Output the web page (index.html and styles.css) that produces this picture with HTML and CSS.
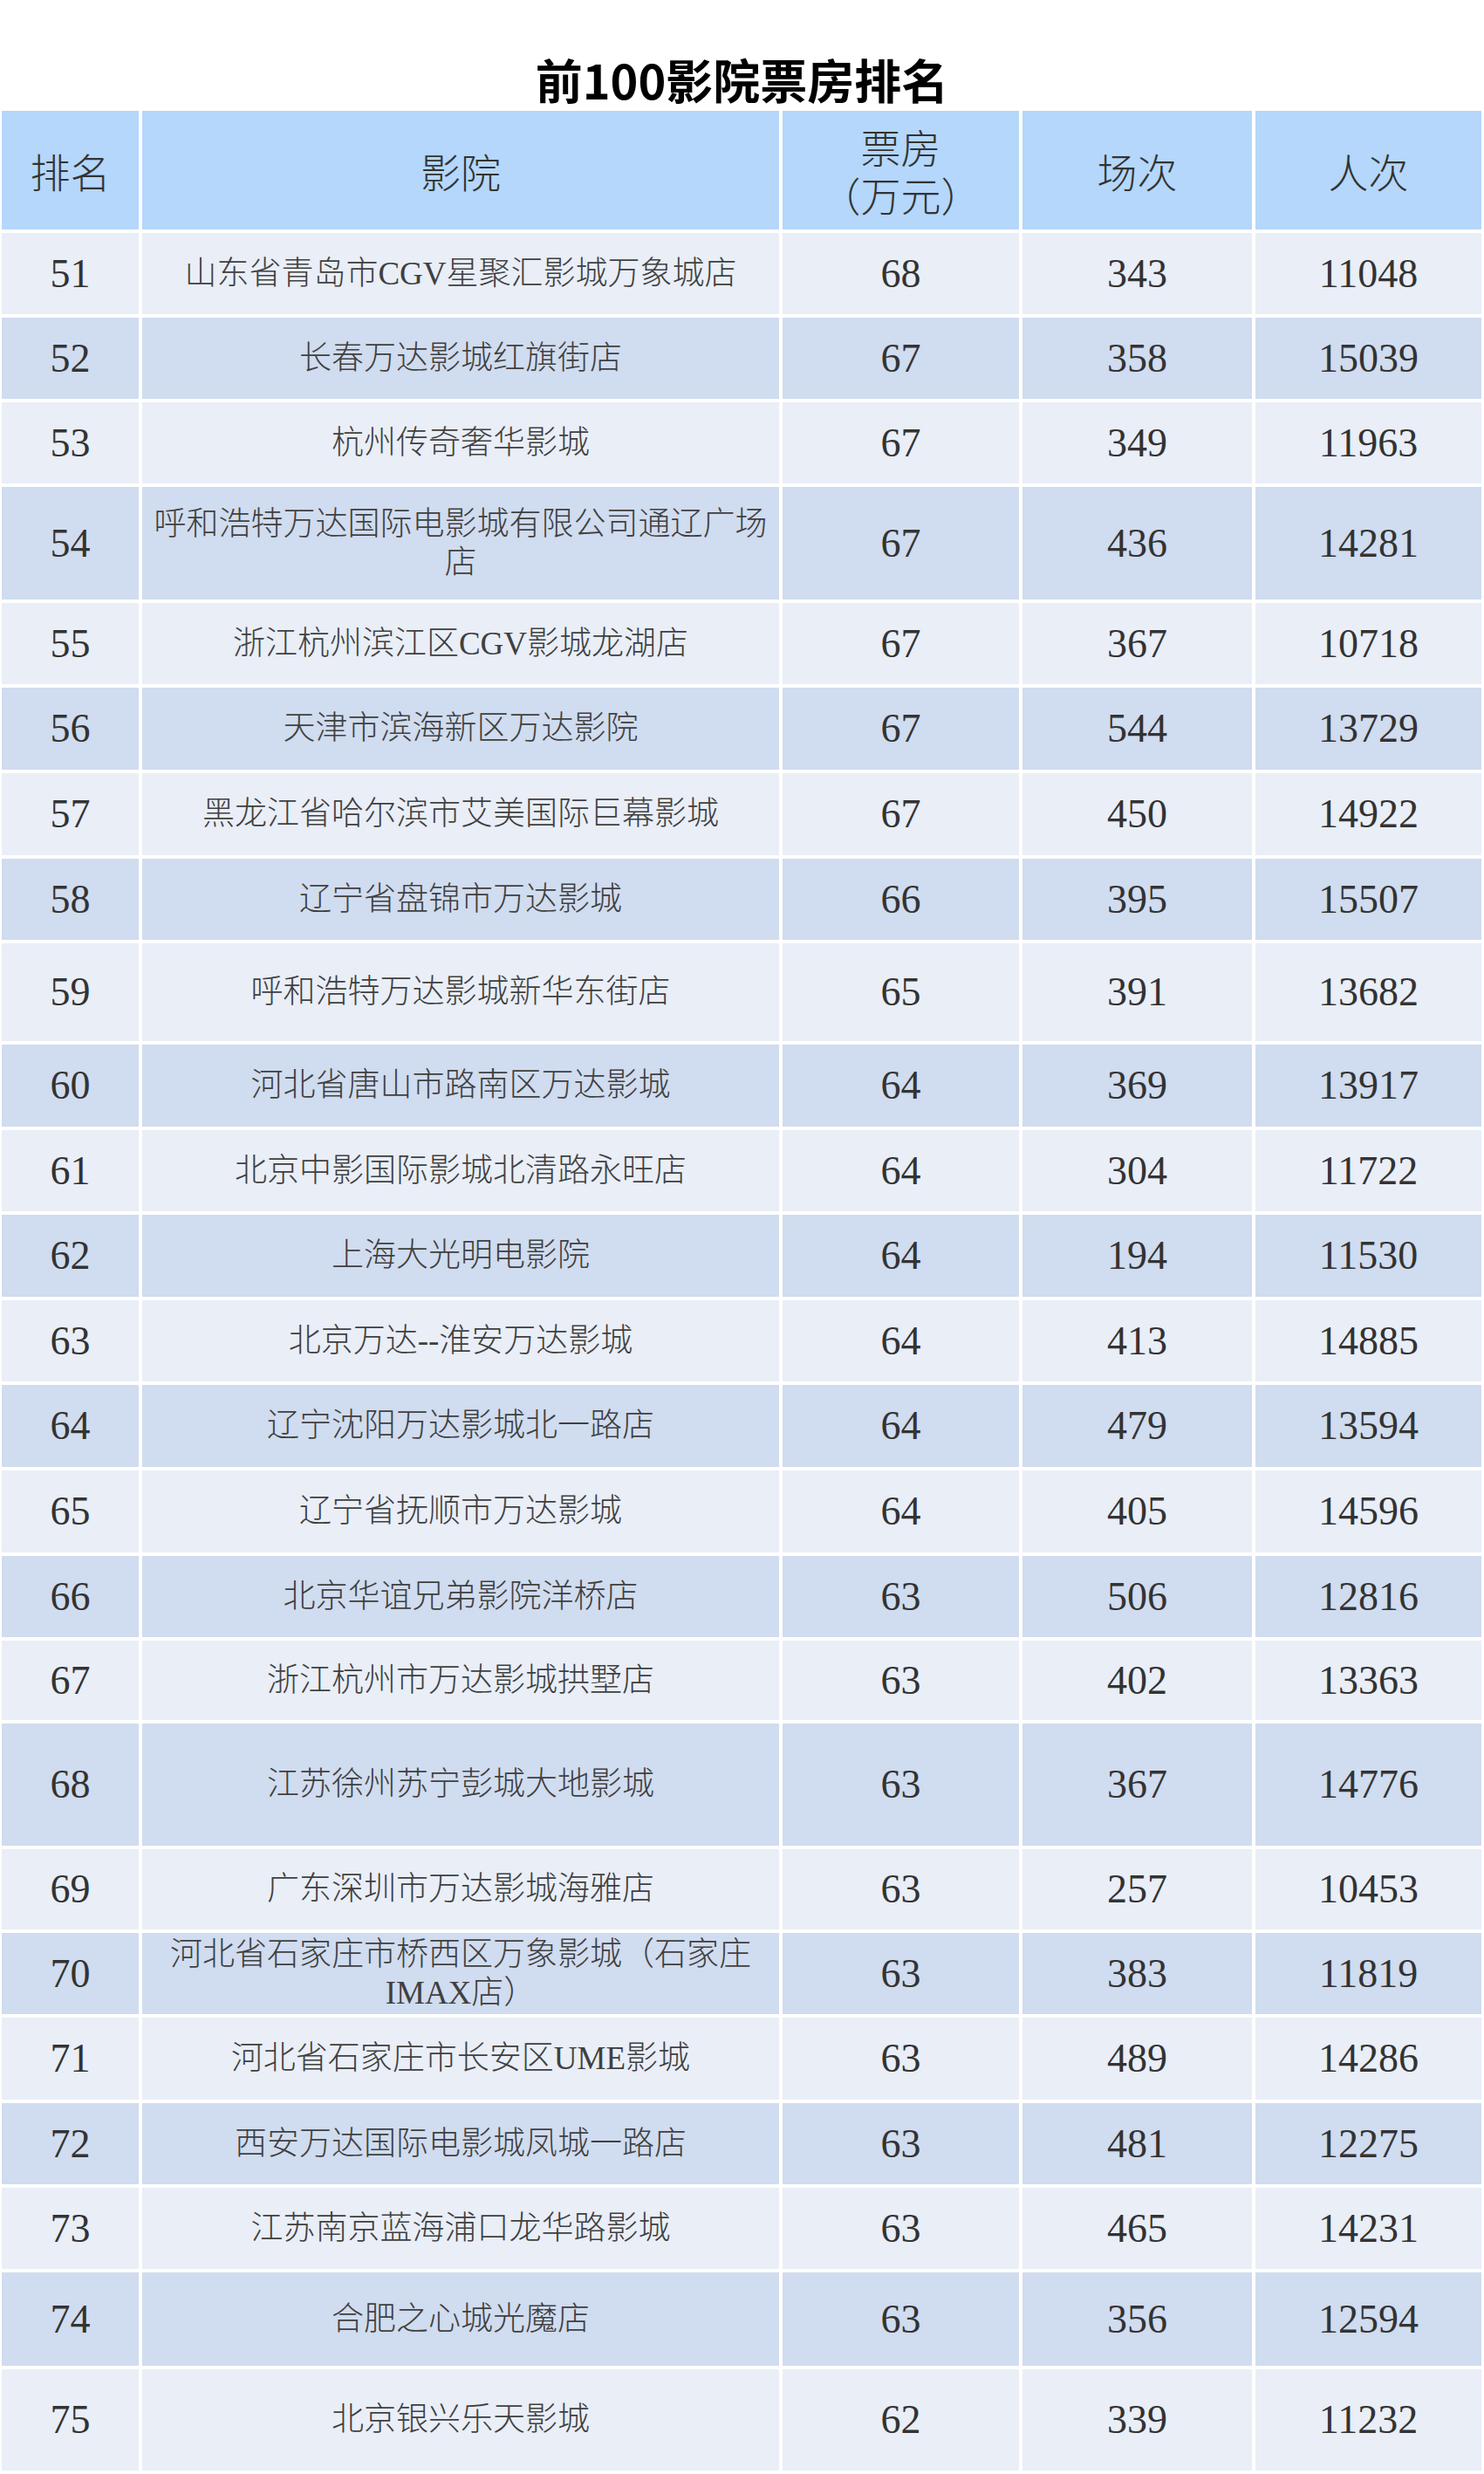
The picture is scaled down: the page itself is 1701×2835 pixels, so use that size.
FILE: index.html
```html
<!DOCTYPE html>
<html lang="zh-CN">
<head>
<meta charset="utf-8">
<title>前100影院票房排名</title>
<link rel="stylesheet" href="styles.css">
</head>
<body>
<div class="page">
  <h1 class="title">前100影院票房排名</h1>
  <div class="table">
    <div class="row head">
      <div class="cell">排名</div>
      <div class="cell">影院</div>
      <div class="cell stack"><span class="line">票房</span><span class="line">（万元）</span></div>
      <div class="cell">场次</div>
      <div class="cell">人次</div>
    </div>
    <div class="row odd"><div class="cell num">51</div><div class="cell name">山东省青岛市CGV星聚汇影城万象城店</div><div class="cell num">68</div><div class="cell num">343</div><div class="cell num">11048</div></div>
    <div class="row even"><div class="cell num">52</div><div class="cell name">长春万达影城红旗街店</div><div class="cell num">67</div><div class="cell num">358</div><div class="cell num">15039</div></div>
    <div class="row odd"><div class="cell num">53</div><div class="cell name">杭州传奇奢华影城</div><div class="cell num">67</div><div class="cell num">349</div><div class="cell num">11963</div></div>
    <div class="row even h129"><div class="cell num">54</div><div class="cell name">呼和浩特万达国际电影城有限公司通辽广场店</div><div class="cell num">67</div><div class="cell num">436</div><div class="cell num">14281</div></div>
    <div class="row odd"><div class="cell num">55</div><div class="cell name">浙江杭州滨江区CGV影城龙湖店</div><div class="cell num">67</div><div class="cell num">367</div><div class="cell num">10718</div></div>
    <div class="row even h94"><div class="cell num">56</div><div class="cell name">天津市滨海新区万达影院</div><div class="cell num">67</div><div class="cell num">544</div><div class="cell num">13729</div></div>
    <div class="row odd h94"><div class="cell num">57</div><div class="cell name">黑龙江省哈尔滨市艾美国际巨幕影城</div><div class="cell num">67</div><div class="cell num">450</div><div class="cell num">14922</div></div>
    <div class="row even"><div class="cell num">58</div><div class="cell name">辽宁省盘锦市万达影城</div><div class="cell num">66</div><div class="cell num">395</div><div class="cell num">15507</div></div>
    <div class="row odd h112"><div class="cell num">59</div><div class="cell name">呼和浩特万达影城新华东街店</div><div class="cell num">65</div><div class="cell num">391</div><div class="cell num">13682</div></div>
    <div class="row even h94"><div class="cell num">60</div><div class="cell name">河北省唐山市路南区万达影城</div><div class="cell num">64</div><div class="cell num">369</div><div class="cell num">13917</div></div>
    <div class="row odd"><div class="cell num">61</div><div class="cell name">北京中影国际影城北清路永旺店</div><div class="cell num">64</div><div class="cell num">304</div><div class="cell num">11722</div></div>
    <div class="row even h94"><div class="cell num">62</div><div class="cell name">上海大光明电影院</div><div class="cell num">64</div><div class="cell num">194</div><div class="cell num">11530</div></div>
    <div class="row odd"><div class="cell num">63</div><div class="cell name">北京万达--淮安万达影城</div><div class="cell num">64</div><div class="cell num">413</div><div class="cell num">14885</div></div>
    <div class="row even h94"><div class="cell num">64</div><div class="cell name">辽宁沈阳万达影城北一路店</div><div class="cell num">64</div><div class="cell num">479</div><div class="cell num">13594</div></div>
    <div class="row odd h94"><div class="cell num">65</div><div class="cell name">辽宁省抚顺市万达影城</div><div class="cell num">64</div><div class="cell num">405</div><div class="cell num">14596</div></div>
    <div class="row even"><div class="cell num">66</div><div class="cell name">北京华谊兄弟影院洋桥店</div><div class="cell num">63</div><div class="cell num">506</div><div class="cell num">12816</div></div>
    <div class="row odd h91"><div class="cell num">67</div><div class="cell name">浙江杭州市万达影城拱墅店</div><div class="cell num">63</div><div class="cell num">402</div><div class="cell num">13363</div></div>
    <div class="row even h140"><div class="cell num">68</div><div class="cell name">江苏徐州苏宁彭城大地影城</div><div class="cell num">63</div><div class="cell num">367</div><div class="cell num">14776</div></div>
    <div class="row odd h92"><div class="cell num">69</div><div class="cell name">广东深圳市万达影城海雅店</div><div class="cell num">63</div><div class="cell num">257</div><div class="cell num">10453</div></div>
    <div class="row even"><div class="cell num">70</div><div class="cell name">河北省石家庄市桥西区万象影城（石家庄IMAX店）</div><div class="cell num">63</div><div class="cell num">383</div><div class="cell num">11819</div></div>
    <div class="row odd h94"><div class="cell num">71</div><div class="cell name">河北省石家庄市长安区UME影城</div><div class="cell num">63</div><div class="cell num">489</div><div class="cell num">14286</div></div>
    <div class="row even"><div class="cell num">72</div><div class="cell name">西安万达国际电影城凤城一路店</div><div class="cell num">63</div><div class="cell num">481</div><div class="cell num">12275</div></div>
    <div class="row odd"><div class="cell num">73</div><div class="cell name">江苏南京蓝海浦口龙华路影城</div><div class="cell num">63</div><div class="cell num">465</div><div class="cell num">14231</div></div>
    <div class="row even h107"><div class="cell num">74</div><div class="cell name">合肥之心城光魔店</div><div class="cell num">63</div><div class="cell num">356</div><div class="cell num">12594</div></div>
    <div class="row odd h116"><div class="cell num">75</div><div class="cell name">北京银兴乐天影城</div><div class="cell num">62</div><div class="cell num">339</div><div class="cell num">11232</div></div>
  </div>
</div>
</body>
</html>
```
FILE: styles.css
```css
html, body {
  margin: 0;
  padding: 0;
  background: #ffffff;
}

.page {
  width: 1701px;
  padding: 64px 0 0 2px;
  box-sizing: border-box;
  font-family: "Liberation Serif", "Noto Sans CJK SC", serif;
  color: #3a3a3a;
}

.title {
  margin: 0 0 9px 0;
  height: 54px;
  line-height: 54px;
  font-family: "Noto Sans CJK SC", sans-serif;
  font-weight: 700;
  font-size: 54px;
  color: #000000;
  text-align: center;
  padding-right: 2px;
}

.table {
  display: flex;
  flex-direction: column;
  gap: 4px;
}

.row {
  display: grid;
  grid-template-columns: 157px 730px 271px 263px 259px;
  column-gap: 4px;
  height: 93px;
}

.row.h91 { height: 91px; }
.row.h92 { height: 92px; }
.row.h94 { height: 94px; }
.row.h107 { height: 107px; }
.row.h112 { height: 112px; }
.row.h116 { height: 116px; }
.row.h129 { height: 129px; }
.row.h140 { height: 140px; }

.cell {
  display: flex;
  align-items: center;
  justify-content: center;
  text-align: center;
}

.head {
  height: 136px;
}

.head .cell {
  background: #b4d7fb;
  font-family: "Noto Sans CJK SC", sans-serif;
  font-weight: 300;
  font-size: 46px;
  line-height: 55px;
  color: #333333;
}

.head .stack {
  flex-direction: column;
}

.head .stack .line {
  display: block;
  line-height: 55px;
}

.odd .cell { background: #e9eef7; }
.even .cell { background: #d0dcef; }

.num {
  font-family: "Liberation Serif", serif;
  font-size: 46px;
  line-height: 50px;
  color: #333333;
}

.name {
  font-family: "Liberation Serif", "Noto Sans CJK SC", serif;
  font-weight: 300;
  font-size: 37px;
  line-height: 44px;
  color: #404040;
}
```
